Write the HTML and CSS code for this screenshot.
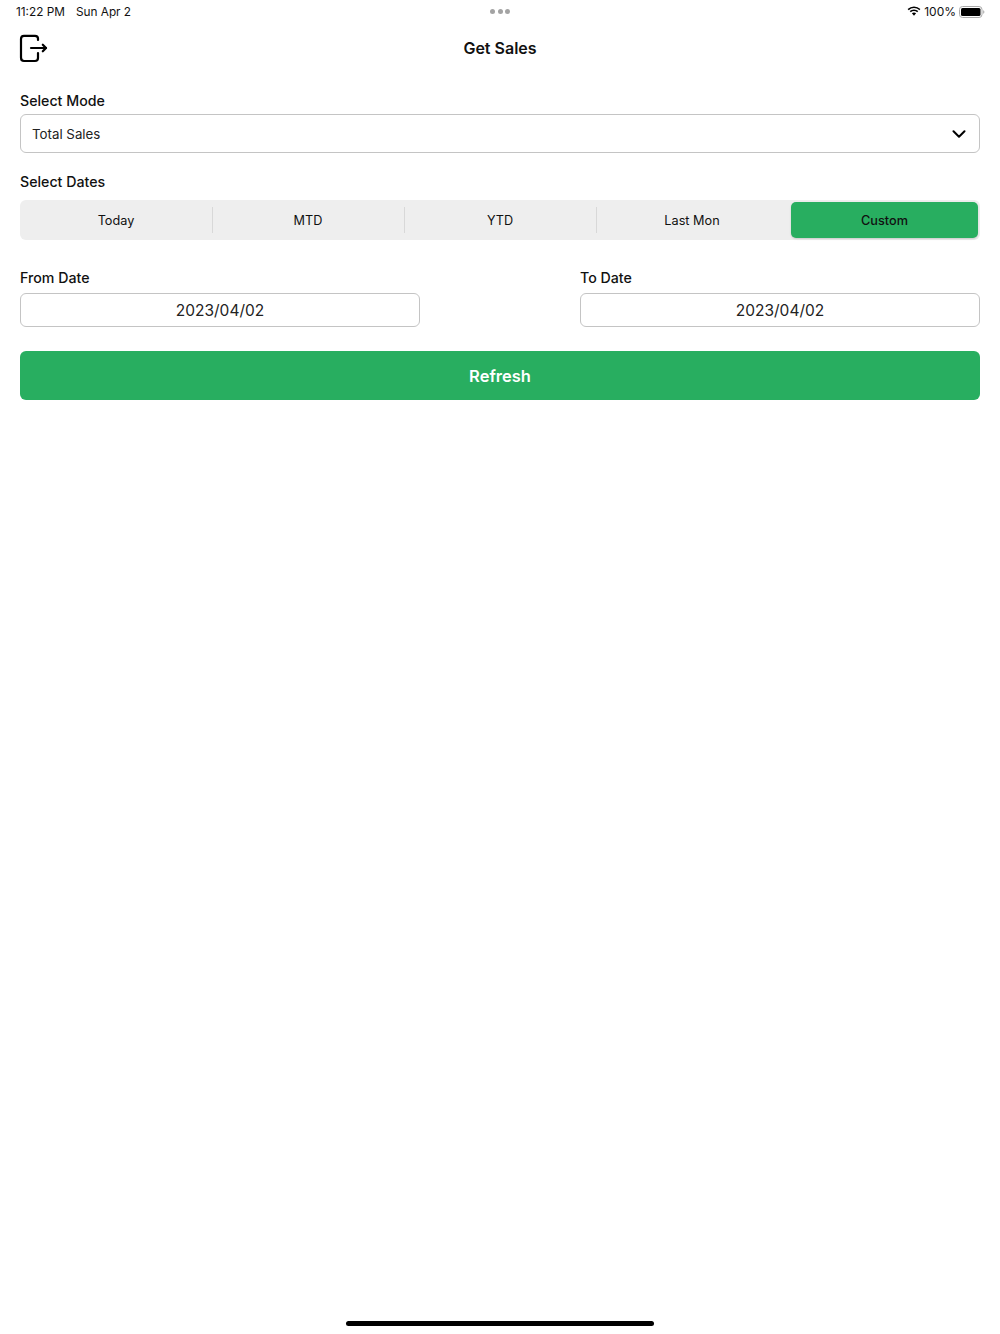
FILE: index.html
```html
<!DOCTYPE html>
<html lang="en">
<head>
  <meta charset="UTF-8">
  <meta name="viewport" content="width=device-width, initial-scale=1.0">
  <title>Get Sales</title>
  <link rel="stylesheet" href="styles.css">
</head>
<body>
  <div class="status-bar">
    <div class="status-left">
      <span>11:22 PM</span>
      <span>Sun Apr 2</span>
    </div>
    <div class="status-dots">
      <span class="dot"></span>
      <span class="dot"></span>
      <span class="dot"></span>
    </div>
    <div class="status-right">
      <svg class="wifi" width="14" height="11" viewBox="0 0 14 11">
        <path d="M7 2.1c2 0 3.9.8 5.3 2.1l1.1-1.2A9.3 9.3 0 0 0 7 .4 9.3 9.3 0 0 0 .6 3l1.1 1.2A7.7 7.7 0 0 1 7 2.1z" fill="#000"/>
        <path d="M7 5.1c1.2 0 2.3.4 3.2 1.2l1.1-1.2A6.3 6.3 0 0 0 7 3.4a6.3 6.3 0 0 0-4.3 1.7l1.1 1.2A4.7 4.7 0 0 1 7 5.1z" fill="#000"/>
        <path d="M7 6.5c-.8 0-1.5.3-2.1.8L7 9.7l2.1-2.4c-.6-.5-1.3-.8-2.100-.8z" fill="#000"/>
      </svg>
      <span>100%</span>
      <svg class="battery" width="26" height="12" viewBox="0 0 26 12">
        <rect x="0.5" y="0.5" width="22.5" height="11" rx="3" fill="none" stroke="#aaa"/>
        <rect x="2" y="2" width="19.5" height="8" rx="1.5" fill="#000"/>
        <path d="M24.2 4.3c.8.2 1.2.9 1.2 1.7s-.4 1.5-1.2 1.7z" fill="#aaa"/>
      </svg>
    </div>
  </div>

  <header class="nav">
    <svg class="logout" width="30" height="30" viewBox="0 0 30 30" fill="none" stroke="#000" stroke-width="2.2" stroke-linecap="round" stroke-linejoin="round">
      <path d="M20 7V5.5C20 3.8 18.8 2.800 17 2.800H6C3.800 2.800 3 3.800 3 6V24.500C3 26.700 3.800 28 6 28H17C18.800 28 20 26.700 20 25V20"/>
      <path d="M13 15H28"/>
      <path d="M24.800 11.700L28 15L24.800 18.300"/>
    </svg>
    <h1>Get Sales</h1>
  </header>

  <main class="content">
    <section class="field">
      <label>Select Mode</label>
      <div class="select">
        <span>Total Sales</span>
        <svg width="14" height="8" viewBox="0 0 14 8" fill="none" stroke="#000" stroke-width="2" stroke-linecap="round" stroke-linejoin="round">
          <path d="M1.500 1.200L7 6.700L12.500 1.200"/>
        </svg>
      </div>
    </section>

    <section class="field dates">
      <label>Select Dates</label>
      <div class="segments">
        <div class="segment">Today</div>
        <div class="segment">MTD</div>
        <div class="segment">YTD</div>
        <div class="segment">Last Mon</div>
        <div class="segment active"><span class="pill">Custom</span></div>
      </div>
    </section>

    <section class="date-row">
      <div class="field">
        <label>From Date</label>
        <div class="date-input">2023/04/02</div>
      </div>
      <div class="field">
        <label>To Date</label>
        <div class="date-input">2023/04/02</div>
      </div>
    </section>

    <button class="refresh">Refresh</button>
  </main>

  <div class="home-indicator"></div>
</body>
</html>
```

FILE: styles.css
```css
* {
  box-sizing: border-box;
}
body {
  margin: 0;
  height: 1334px;
  position: relative;
  overflow: hidden;
  background: #fff;
  color: #000;
  font-family: Inter, "Liberation Sans", sans-serif;
}
.status-bar {
  height: 24px;
  padding: 0 16px 1px;
  display: grid;
  grid-template-columns: 1fr auto 1fr;
  align-items: center;
  font-size: 12px;
  color: #111;
}
.status-left {
  display: flex;
  gap: 11px;
  font-size: 11.8px;
}
.status-dots {
  display: flex;
  gap: 2.5px;
}
.dot {
  width: 5px;
  height: 5px;
  border-radius: 50%;
  background: #a3a3a3;
}
.status-right {
  display: flex;
  justify-content: flex-end;
  align-items: center;
  gap: 4px;
}
.wifi {
  margin-right: -1px;
}
.battery {
  margin: 0 -1px;
}
.nav {
  height: 48px;
  position: relative;
  display: flex;
  align-items: center;
  justify-content: center;
}
.nav h1 {
  margin: 0;
  font-size: 16px;
  font-weight: 600;
  color: #111;
}
.logout {
  position: absolute;
  left: 18px;
  top: 9px;
}
.content {
  padding: 20px 20px 0;
  display: flex;
  flex-direction: column;
}
.field {
  display: flex;
  flex-direction: column;
}
.field label {
  font-size: 14.2px;
  font-weight: 500;
  line-height: 18px;
  color: #111;
  margin-bottom: 4px;
}
.select {
  height: 39px;
  padding: 0 13px 0 11px;
  border: 1px solid #c4c4c4;
  border-radius: 6px;
  display: flex;
  align-items: center;
  justify-content: space-between;
  font-size: 13.3px;
  color: #222;
}
.dates {
  margin-top: 20px;
}
.dates label {
  margin-bottom: 9px;
}
.segments {
  height: 40px;
  background: #eee;
  border-radius: 6px;
  display: grid;
  grid-template-columns: repeat(5, 1fr);
}
.segment {
  position: relative;
  display: flex;
  align-items: center;
  justify-content: center;
  font-size: 12.7px;
  color: #111;
}
.segment + .segment::before {
  content: "";
  position: absolute;
  left: -0.5px;
  top: 7px;
  bottom: 7px;
  width: 1px;
  background: #d8d8d8;
}
.segment.active {
  padding: 2px 2px 2px 3px;
  font-weight: 500;
}
.segment.active::before {
  display: none;
}
.pill {
  flex: 1;
  align-self: stretch;
  display: flex;
  align-items: center;
  justify-content: center;
  background: #28ae60;
  border-radius: 5px;
  box-shadow: 0 1px 2px rgba(0, 0, 0, .15);
}
.date-row {
  margin-top: 29px;
  display: grid;
  grid-template-columns: 400px 400px;
  justify-content: space-between;
}
.date-row label {
  margin-bottom: 6px;
}
.date-input {
  height: 34px;
  border: 1px solid #c4c4c4;
  border-radius: 6px;
  display: flex;
  align-items: center;
  justify-content: center;
  font-size: 15.5px;
  color: #222;
}
.refresh {
  margin-top: 24px;
  height: 49px;
  border: none;
  border-radius: 6px;
  background: #28ae60;
  color: #fff;
  font-family: inherit;
  font-size: 16.5px;
  font-weight: 600;
}
.home-indicator {
  position: absolute;
  left: 346px;
  bottom: 8px;
  width: 308px;
  height: 5px;
  border-radius: 3px;
  background: #000;
}
```
